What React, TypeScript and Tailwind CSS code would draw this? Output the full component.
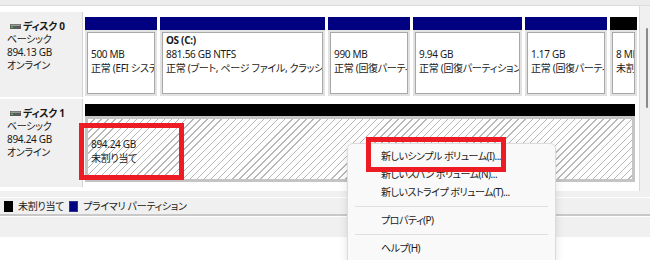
import React from 'react';

interface Partition {
  width: string;
  name: string;
  size: string;
  status: string;
  bar: string;
}

const partitions: Partition[] = [
  { width: 'w-[72px]', name: '', size: '500 MB', status: '正常 (EFI システム パーティション)', bar: 'bg-[#000080]' },
  { width: 'w-[165px]', name: 'OS  (C:)', size: '881.56 GB NTFS', status: '正常 (ブート, ページ ファイル, クラッシュ ダンプ, ベーシック データ パーティション)', bar: 'bg-[#000080]' },
  { width: 'w-[82px]', name: '', size: '990 MB', status: '正常 (回復パーティション)', bar: 'bg-[#000080]' },
  { width: 'w-[109px]', name: '', size: '9.94 GB', status: '正常 (回復パーティション)', bar: 'bg-[#000080]' },
  { width: 'w-[82px]', name: '', size: '1.17 GB', status: '正常 (回復パーティション)', bar: 'bg-[#000080]' },
  { width: 'w-[27px]', name: '', size: '8 MB', status: '未割り当て', bar: 'bg-black' },
];

function DiskIcon() {
  return (
    <svg width="11" height="5" viewBox="0 0 11 5" className="shrink-0">
      <rect x="0" y="0" width="11" height="5" fill="#5a5a5a" />
      <rect x="0.5" y="0.5" width="10" height="1.5" fill="#9a9a9a" />
      <rect x="1" y="2.5" width="2" height="1.5" fill="#3fbf3f" />
    </svg>
  );
}

function DiskLabel({ name, size }: { name: string; size: string }) {
  return (
    <div className="w-[83px] shrink-0 bg-[#f0f0f0] border-r border-[#d4d4d4] pl-[7px] pt-[8px] leading-[13px]">
      <div className="flex items-center gap-[2px] ml-[3px]">
        <DiskIcon />
        <span className="font-bold">{name}</span>
      </div>
      <div>ベーシック</div>
      <div>{size}</div>
      <div>オンライン</div>
    </div>
  );
}

function PartitionBox({ p }: { p: Partition }) {
  return (
    <div className={`${p.width} shrink-0 flex flex-col`}>
      <div className={`h-[13px] ${p.bar}`} />
      <div className="h-[66px] border-2 border-[#e2e2e2]">
        <div className="h-full border border-[#a8a8a8] bg-white pl-[3px] leading-[14px] overflow-hidden whitespace-nowrap">
          <div className="font-bold h-[14px]">{p.name}</div>
          <div>{p.size}</div>
          <div>{p.status}</div>
        </div>
      </div>
    </div>
  );
}

export default function App() {
  const menuItems = [
    '新しいシンプル ボリューム(I)...',
    '新しいスパン ボリューム(N)...',
    '新しいストライプ ボリューム(T)...',
  ];

  return (
    <div className="relative w-[650px] h-[260px] overflow-hidden bg-[#f0f0f0] text-[10px] tracking-[-0.3px] text-[#1a1a1a] font-['Noto_Sans','Noto_Sans_CJK_JP',sans-serif] [font-feature-settings:'palt']">
      <div className="h-[6px] bg-[#ececec] border-b border-[#dcdcdc]" />

      <div className="flex h-[185px]">
        <div className="flex-1 bg-white border-r border-[#d9d9d9] pt-[6px] flex flex-col gap-[2px]">
          {/* Disk 0 */}
          <div className="flex h-[85px]">
            <DiskLabel name="ディスク 0" size="894.13 GB" />
            <div className="flex gap-[3px] pl-[2px] pt-[5px]">
              {partitions.map((p) => (
                <PartitionBox key={p.size + p.width} p={p} />
              ))}
            </div>
          </div>

          {/* Disk 1 */}
          <div className="flex h-[88px]">
            <DiskLabel name="ディスク 1" size="894.24 GB" />
            <div className="flex flex-col w-[552px] pl-[2px] pt-[5px]">
              <div className="h-[12px] bg-black" />
              <div className="h-[66px] border-[3px] border-[#c4c4c4] bg-[repeating-linear-gradient(135deg,#ffffff_0px,#ffffff_4px,#b8b8b8_4px,#b8b8b8_5px)] pl-[3px] pt-[4px] leading-[14px]">
                <div className="h-[14px]" />
                <div>894.24 GB</div>
                <div>未割り当て</div>
              </div>
            </div>
          </div>
        </div>
        <div className="w-[10px] pt-[22px]">
          <div className="ml-[6px] w-[2px] h-[80px] rounded-full bg-[#8a8a8a]" />
        </div>
      </div>

      {/* Legend */}
      <div className="h-[6px]" />
      <div className="border-t border-white h-[17px] flex items-center pl-[4px] gap-[5px]">
        <div className="flex items-center gap-[5px]">
          <div className="w-[9px] h-[11px] bg-black" />
          <span>未割り当て</span>
        </div>
        <div className="flex items-center gap-[5px]">
          <div className="w-[9px] h-[11px] bg-[#000080] border border-[#303090]" />
          <span>プライマリ パーティション</span>
        </div>
      </div>
      <div className="h-[2px] bg-[#c8c8c8]" />
      <div className="h-[1px] bg-white" />
      <div className="h-[20px] bg-[#f0f0f0]" />
      <div className="h-[30px] bg-white" />

      {/* Context menu */}
      <div className="absolute left-[347px] top-[143px] w-[209px] h-[130px] rounded-[6px] border border-[#dcdcdc] bg-[#f9f9f9] shadow-[0_2px_8px_rgba(0,0,0,0.12)] pt-[3px] text-[10px] tracking-[-0.5px]">
        {menuItems.map((m) => (
          <div key={m} className="h-[18px] flex items-center pl-[33px]">
            {m}
          </div>
        ))}
        <div className="h-[10px] flex items-center px-[7px]">
          <div className="h-[1px] w-full bg-[#e0e0e0]" />
        </div>
        <div className="h-[18px] flex items-center pl-[33px]">プロパティ(P)</div>
        <div className="h-[10px] flex items-center px-[7px]">
          <div className="h-[1px] w-full bg-[#e0e0e0]" />
        </div>
        <div className="h-[18px] flex items-center pl-[33px]">ヘルプ(H)</div>
      </div>

      {/* Annotations */}
      <div className="absolute left-[79px] top-[123px] w-[105px] h-[57px] border-[5px] border-[#ed1c24]" />
      <div className="absolute left-[366px] top-[137px] w-[140px] h-[35px] border-[5px] border-[#ed1c24]" />
    </div>
  );
}
